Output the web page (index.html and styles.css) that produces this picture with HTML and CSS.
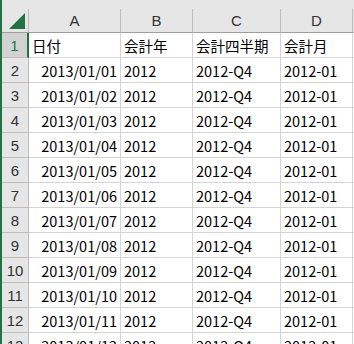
FILE: index.html
```html
<!DOCTYPE html>
<html lang="ja">
<head>
  <meta charset="UTF-8">
  <title>Sheet</title>
  <link rel="stylesheet" href="styles.css">
</head>
<body>
  <div class="sheet">
    <div class="topband"></div>
    <div class="grid">
      <div class="corner"><span class="tri"></span></div>
      <div class="colhead">A</div>
      <div class="colhead">B</div>
      <div class="colhead">C</div>
      <div class="colhead">D</div>
      <div class="edge head"></div>

      <div class="rowhead active">1</div>
      <div class="cell">日付</div>
      <div class="cell">会計年</div>
      <div class="cell">会計四半期</div>
      <div class="cell">会計月</div>
      <div class="edge"></div>

      <div class="rowhead">2</div>
      <div class="cell num">2013/01/01</div>
      <div class="cell">2012</div>
      <div class="cell">2012-Q4</div>
      <div class="cell">2012-01</div>
      <div class="edge"></div>

      <div class="rowhead">3</div>
      <div class="cell num">2013/01/02</div>
      <div class="cell">2012</div>
      <div class="cell">2012-Q4</div>
      <div class="cell">2012-01</div>
      <div class="edge"></div>

      <div class="rowhead">4</div>
      <div class="cell num">2013/01/03</div>
      <div class="cell">2012</div>
      <div class="cell">2012-Q4</div>
      <div class="cell">2012-01</div>
      <div class="edge"></div>

      <div class="rowhead">5</div>
      <div class="cell num">2013/01/04</div>
      <div class="cell">2012</div>
      <div class="cell">2012-Q4</div>
      <div class="cell">2012-01</div>
      <div class="edge"></div>

      <div class="rowhead">6</div>
      <div class="cell num">2013/01/05</div>
      <div class="cell">2012</div>
      <div class="cell">2012-Q4</div>
      <div class="cell">2012-01</div>
      <div class="edge"></div>

      <div class="rowhead">7</div>
      <div class="cell num">2013/01/06</div>
      <div class="cell">2012</div>
      <div class="cell">2012-Q4</div>
      <div class="cell">2012-01</div>
      <div class="edge"></div>

      <div class="rowhead">8</div>
      <div class="cell num">2013/01/07</div>
      <div class="cell">2012</div>
      <div class="cell">2012-Q4</div>
      <div class="cell">2012-01</div>
      <div class="edge"></div>

      <div class="rowhead">9</div>
      <div class="cell num">2013/01/08</div>
      <div class="cell">2012</div>
      <div class="cell">2012-Q4</div>
      <div class="cell">2012-01</div>
      <div class="edge"></div>

      <div class="rowhead">10</div>
      <div class="cell num">2013/01/09</div>
      <div class="cell">2012</div>
      <div class="cell">2012-Q4</div>
      <div class="cell">2012-01</div>
      <div class="edge"></div>

      <div class="rowhead">11</div>
      <div class="cell num">2013/01/10</div>
      <div class="cell">2012</div>
      <div class="cell">2012-Q4</div>
      <div class="cell">2012-01</div>
      <div class="edge"></div>

      <div class="rowhead">12</div>
      <div class="cell num">2013/01/11</div>
      <div class="cell">2012</div>
      <div class="cell">2012-Q4</div>
      <div class="cell">2012-01</div>
      <div class="edge"></div>

      <div class="rowhead">13</div>
      <div class="cell num">2013/01/12</div>
      <div class="cell">2012</div>
      <div class="cell">2012-Q4</div>
      <div class="cell">2012-01</div>
      <div class="edge"></div>
    </div>
  </div>
</body>
</html>
```

FILE: styles.css
```css
body {
  margin: 0;
  overflow: hidden;
  background: #fff;
  font-family: "Noto Sans CJK JP", "Liberation Sans", sans-serif;
  font-size: 14.5px;
  color: #000;
}
.sheet {
  width: 354px;
  height: 344px;
  overflow: hidden;
  border-left: 2px solid #217346;
  box-sizing: border-box;
}
.topband {
  height: 9px;
  background: #e6e6e6;
}
.grid {
  display: grid;
  grid-template-columns: 27px 92px 72px 88px 72px 1fr;
  grid-auto-rows: 25px;
  grid-template-rows: 24px;
}
.grid > div {
  box-sizing: border-box;
  border-right: 1px solid #d4d4d4;
  border-bottom: 1px solid #d4d4d4;
  display: flex;
  align-items: center;
  white-space: nowrap;
  overflow: hidden;
}
.corner {
  background: #e6e6e6;
  position: relative;
  border-right-color: #bdbdbd !important;
  border-bottom-color: #9e9e9e !important;
}
.tri {
  position: absolute;
  right: 3px;
  bottom: 3px;
  width: 0;
  height: 0;
  border-left: 16px solid transparent;
  border-bottom: 16px solid #217346;
}
.grid > .colhead {
  background: #e6e6e6;
  justify-content: center;
  color: #333;
  font-family: "Liberation Sans", sans-serif;
  font-size: 15px;
  border-right-color: #bdbdbd;
  border-bottom-color: #9e9e9e;
}
.grid > .edge {
  border-right: none;
  background: #fff;
}
.grid > .edge.head {
  background: #e6e6e6;
  border-bottom-color: #9e9e9e;
}
.grid > .rowhead {
  background: #e6e6e6;
  justify-content: center;
  color: #333;
  font-family: "Liberation Sans", sans-serif;
  font-size: 15px;
  border-right-color: #bdbdbd;
  border-bottom-color: #bdbdbd;
}
.grid > .rowhead.active {
  background: #d2d2d2;
  color: #217346;
  border-right: 2px solid #217346;
}
.cell {
  padding: 0 3px;
}
.cell.num {
  justify-content: flex-end;
}
```
